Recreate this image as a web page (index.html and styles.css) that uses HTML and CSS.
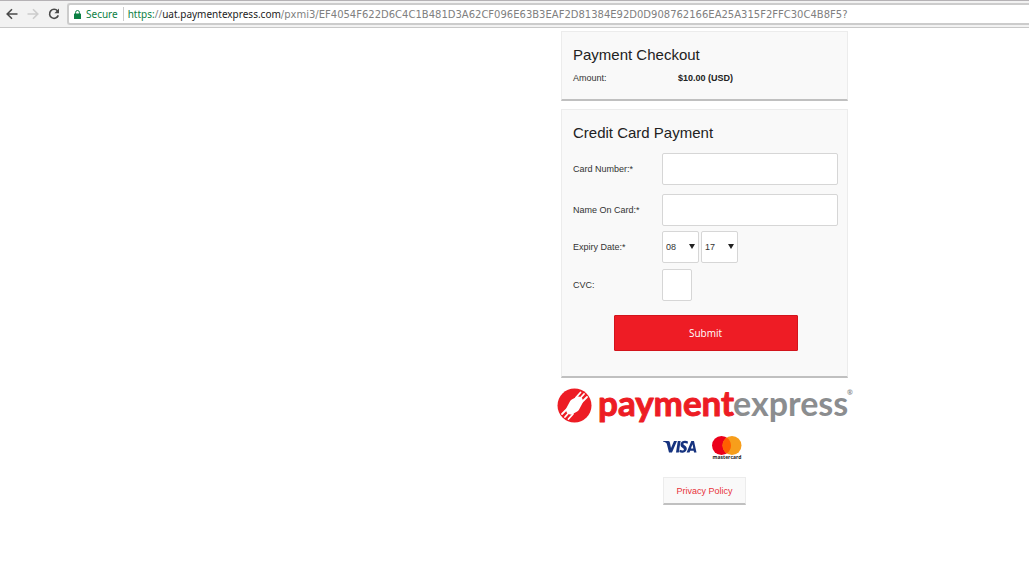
FILE: index.html
```html
<!DOCTYPE html>
<html lang="en">
<head>
  <meta charset="UTF-8" />
  <meta name="viewport" content="width=device-width, initial-scale=1" />
  <title>Payment Checkout</title>
  <link rel="stylesheet" href="styles.css">
</head>
<body>
  <header class="toolbar">
    <button class="nav-btn" aria-label="Back">
      <svg width="12" height="12" viewBox="0 0 12 12"><path d="M11.5 6H1.5M6 1.2L1.2 6L6 10.8" /></svg>
    </button>
    <button class="nav-btn disabled" aria-label="Forward" disabled>
      <svg width="12" height="12" viewBox="0 0 12 12"><path d="M.5 6H10.5M6 1.2L10.8 6L6 10.8" /></svg>
    </button>
    <button class="nav-btn" aria-label="Reload">
      <svg width="12" height="12" viewBox="0 0 12 12"><path d="M9.6 3A4.5 4.5 0 1 0 10.3 7.4" /><path class="tip" d="M11 .6V5.2H6.4Z" /></svg>
    </button>
    <div class="address">
      <svg class="lock" width="7" height="9" viewBox="0 0 7 9"><rect y="3.5" width="7" height="5.5" rx=".6" /><path d="M1.6 4V2.4a1.9 1.9 0 0 1 3.8 0V4" /></svg>
      <span class="secure">Secure</span>
      <span class="url"><span class="scheme">https:</span>//<span class="host">uat.paymentexpress.com</span><span class="path">/pxmi3/EF4054F622D6C4C1B481D3A62CF096E63B3EAF2D81384E92D0D908762166EA25A315F2FFC30C4B8F5?</span></span>
    </div>
  </header>

  <main class="page">
    <div class="column">
      <section class="card summary">
        <h1>Payment Checkout</h1>
        <div class="amount"><span>Amount:</span><strong>$10.00 (USD)</strong></div>
      </section>

      <form class="card">
        <h1>Credit Card Payment</h1>
        <div class="row wide">
          <label for="card-number">Card Number:*</label>
          <input type="text" id="card-number" />
        </div>
        <div class="row wide">
          <label for="card-name">Name On Card:*</label>
          <input type="text" id="card-name" />
        </div>
        <div class="row">
          <label for="month">Expiry Date:*</label>
          <span class="select"><select id="month"><option>08</option></select></span>
          <span class="select"><select id="year" aria-label="Expiry year"><option>17</option></select></span>
        </div>
        <div class="row">
          <label for="cvc">CVC:</label>
          <input class="cvc" type="text" id="cvc" />
        </div>
        <button class="submit" type="submit">Submit</button>
      </form>

      <svg class="logo" viewBox="0 -6 296 48" role="img" aria-label="paymentexpress">
        <circle cx="17.500" cy="17.500" r="17" fill="#ed1c24" />
        <g stroke="#fff" fill="none" stroke-linecap="round">
          <path stroke-width="9" stroke-linejoin="round" d="M13.500 22L17 15.500L21.500 13L18 19.500Z" />
          <path stroke-width="1.800" d="M19 9.500L23.500 4.500M22.500 11L27 6M25 14L30 9M5 26L10 21M8 29L12.500 24M11.500 31L16 26" />
        </g>
        <text class="pay" x="41" y="28">payment</text>
        <text class="express" x="176" y="28">express</text>
        <text class="reg" x="290" y="7">®</text>
      </svg>

      <div class="brands">
        <svg width="34" height="24" viewBox="0 0 34 24" role="img" aria-label="Visa">
          <g fill="#16337f">
            <path d="M0 6H5.200Q6.600 6 6.900 7.400L8 13L11 6H14L9 17.500H6L3.700 8.500Q2.500 7.200 0 6.600Z" />
            <path d="M14.800 6H17.600L15.800 17.500H13Z" />
            <path d="M25 6.400L24.600 8.800Q20.600 7.300 20.300 9C20.300 10.300 24 10.800 23.800 13.700C23.500 18 18.600 18.200 16.300 17.100L16.800 14.700Q20.900 16.400 20.900 14.200C20.900 12.900 17.400 12.600 17.500 9.400C17.800 5.700 22 5.200 25 6.400Z" />
            <path fill-rule="evenodd" d="M28.300 6H31L33.500 17.500H31L30.700 15.700H27.200L26.500 17.500H23.600ZM29.500 9.200L27.900 13.600H30.300Z" />
          </g>
        </svg>
        <svg width="32" height="26" viewBox="0 0 32 26" role="img" aria-label="mastercard">
          <circle cx="10.500" cy="10.500" r="9.500" fill="#eb001b" />
          <circle cx="21" cy="10.500" r="9.500" fill="#f79e1b" />
          <path d="M15.750 2.600a9.500 9.500 0 0 1 0 15.800a9.500 9.500 0 0 1 0-15.800" fill="#ff5f00" />
          <text class="mc" x="16" y="24">mastercard</text>
        </svg>
      </div>

      <a class="privacy" href="#">Privacy Policy</a>
    </div>
  </main>
</body>
</html>
```

FILE: styles.css
```css
* { box-sizing: border-box; }
body {
  margin: 0;
  background: #fff;
  color: #333;
  font: 9px/12px "Liberation Sans", Arial, sans-serif;
}
.toolbar {
  display: flex;
  align-items: center;
  gap: 9px;
  height: 28px;
  padding-left: 6px;
  background: #f2f2f2;
  border-top: 1px solid #b5b2b5;
  border-bottom: 1px solid #c8c8c8;
}
.nav-btn {
  display: flex;
  padding: 0;
  border: 0;
  background: none;
}
.nav-btn svg {
  fill: none;
  stroke: #4a4a4a;
  stroke-width: 1.6;
}
.nav-btn .tip {
  fill: #4a4a4a;
  stroke: none;
}
.nav-btn.disabled svg { stroke: #ccc; }
.address {
  display: flex;
  flex: 1;
  align-items: center;
  min-width: 0;
  height: 22px;
  margin-left: -2px;
  padding-left: 5px;
  background: #fff;
  border: 2px solid #ccc;
  border-right: 0;
  border-radius: 3px 0 0 3px;
  font: 10px/14px "Noto Sans", sans-serif;
  white-space: nowrap;
}
.lock { fill: #0b8043; }
.lock path {
  fill: none;
  stroke: #0b8043;
}
.secure {
  margin-left: 5px;
  padding-right: 5px;
  border-right: 1px solid #ccc;
  color: #0b8043;
}
.url {
  margin-left: 4px;
  color: #808080;
}
.scheme { color: #0b8043; }
.host { color: #222; }
.path { font-family: "DejaVu Sans", sans-serif; }

.page {
  display: flex;
  justify-content: flex-end;
  padding: 3px 181px 20px 0;
}
.column {
  display: flex;
  flex-direction: column;
  width: 287px;
}
.card {
  margin-bottom: 8px;
  padding: 14px 9px 25px 11px;
  background: #f9f9f9;
  border: 1px solid #ececec;
  border-bottom: 2px solid #c0c0c0;
}
.summary { padding-bottom: 15px; }
h1 {
  margin: 0 0 11px;
  color: #222;
  font-size: 15px;
  font-weight: normal;
  line-height: 18px;
}
.summary h1 { margin-bottom: 8px; }
.amount { display: flex; }
.amount span { width: 105px; }
.amount strong { color: #222; }
.row {
  display: flex;
  align-items: center;
  gap: 2px;
  margin-bottom: 6px;
}
.row.wide + .row { margin-top: 5px; }
.row.wide + .row.wide { margin-top: 9px; }
.row.wide { margin-bottom: 0; }
.row label { width: 87px; }
.row input, .row select {
  height: 32px;
  background: #fff;
  border: 1px solid #d6d6d6;
  border-radius: 2px;
  color: #333;
  font: inherit;
}
.row input {
  flex: 1;
  min-width: 0;
  padding: 0 4px;
}
.row .cvc { flex: 0 0 30px; }
.select {
  position: relative;
  display: flex;
}
.select select {
  width: 37px;
  padding: 0 3px;
  appearance: none;
}
.select::after {
  content: "";
  position: absolute;
  top: 13px;
  right: 4px;
  border: solid transparent;
  border-width: 5px 3px 0;
  border-top-color: #222;
  pointer-events: none;
}
.submit {
  display: block;
  width: 184px;
  height: 36px;
  margin: 14px auto 0;
  background: #ee1c25;
  border: 1px solid #d2141c;
  border-radius: 1px;
  color: #fff;
  font: 10px/14px "Open Sans", sans-serif;
}
.logo {
  height: 48px;
  margin: -4px -5px 0 -4px;
  overflow: visible;
}
.logo text {
  font-family: Lato, sans-serif;
  font-size: 35px;
  font-weight: bold;
  stroke-linejoin: round;
}
.logo .pay {
  fill: #ed1c24;
  stroke: #ed1c24;
}
.logo .express {
  fill: #8b8d8f;
  font-size: 34px;
}
.logo .reg {
  fill: #8b8d8f;
  font-size: 7px;
}
.brands {
  display: flex;
  justify-content: center;
  gap: 14px;
  margin-top: 5px;
  padding-right: 4px;
}
.mc {
  fill: #222;
  font: bold 5px "Open Sans", sans-serif;
  text-anchor: middle;
}
.privacy {
  align-self: center;
  margin-top: 16px;
  padding: 7px 12px 6px;
  background: #f9f9f9;
  border: 1px solid #ececec;
  border-bottom: 2px solid #c0c0c0;
  color: #e8323a;
  text-decoration: none;
}
```
